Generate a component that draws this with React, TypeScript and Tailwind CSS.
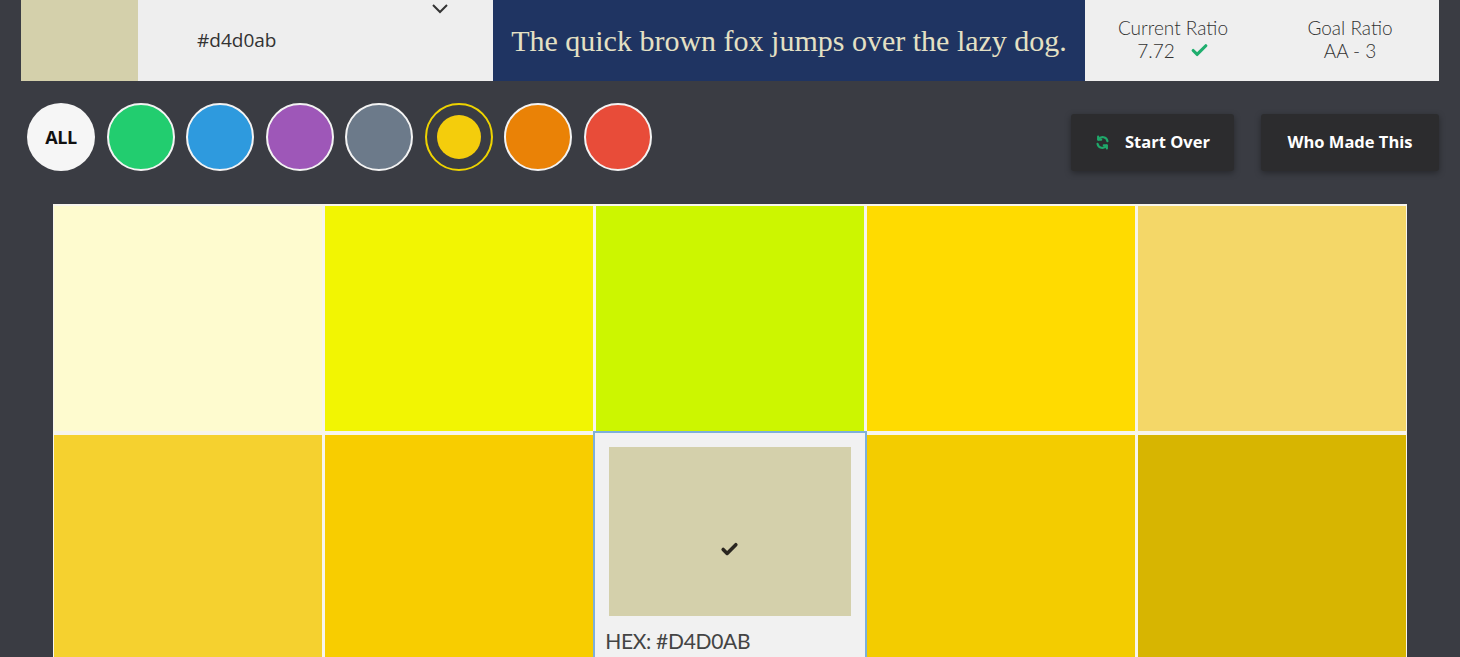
import React from 'react';
import { Check } from 'lucide-react';

const FILTERS = [
  { key: 'green', color: '#22cd6f' },
  { key: 'blue', color: '#2e9ade' },
  { key: 'purple', color: '#9e57b8' },
  { key: 'gray', color: '#6c7a8a' },
  { key: 'yellow', color: '#f4cd0c', active: true },
  { key: 'orange', color: '#ea8206' },
  { key: 'red', color: '#e84c39' },
];

const ROW_ONE = ['#fefbcf', '#f2f502', '#ccf600', '#ffdb00', '#f4d768'];
const ROW_TWO = ['#f5d12f', '#f8cd00', null, '#f3cc00', '#d7b501'];

const RefreshIcon = () => (
  <svg className="w-[15px] h-[15px]" viewBox="0 0 24 24" fill="none" stroke="#1fa86a" strokeWidth={3.4} strokeLinecap="round">
    <path d="M20 10a8 8 0 0 0-14.5-3" />
    <path d="M4 14a8 8 0 0 0 14.5 3" />
    <path d="M5 2.5v5h5" strokeLinejoin="round" />
    <path d="M19 21.5v-5h-5" strokeLinejoin="round" />
  </svg>
);

export default function App() {
  return (
    <div className="w-[1460px] h-[657px] overflow-hidden bg-[#3a3c43]" style={{ fontFamily: '"Open Sans", sans-serif' }}>
      {/* top bar */}
      <div className="mx-[21px] h-[81px] flex">
        <div className="relative w-[117px] bg-[#d4d0ab]">
          <div className="absolute right-[-7px] top-[33px] w-0 h-0 border-y-[7px] border-y-transparent border-l-[7px] border-l-[#d4d0ab]" />
        </div>
        <div className="relative w-[355px] bg-[#eeeeee] flex items-center pl-[59px]">
          <span className="text-[19px] text-[#333] leading-none">#d4d0ab</span>
          <svg className="absolute left-[293px] top-[2px] w-[18px] h-[12px]" viewBox="0 0 18 12" fill="none" stroke="#333" strokeWidth={2}>
            <path d="M2 3l7 7 7-7" />
          </svg>
        </div>
        <div className="w-[592px] bg-[#1f3462] flex items-center justify-center">
          <span className="whitespace-nowrap text-[30px] text-[#e4e0c4] leading-none" style={{ fontFamily: '"Liberation Serif", serif' }}>
            The quick brown fox jumps over the lazy dog.
          </span>
        </div>
        <div className="flex-1 bg-[#efefef] flex text-[#333] text-[19px] leading-[23px] font-light" style={{ fontFamily: 'Lato, sans-serif' }}>
          <div className="w-[176px] flex flex-col items-center justify-center pb-[4px]">
            <span>Current Ratio</span>
            <span className="flex items-center gap-[15px]">
              7.72
              <Check className="w-[19px] h-[19px] text-[#1fae6e]" strokeWidth={4} />
            </span>
          </div>
          <div className="flex-1 flex flex-col items-center justify-center pb-[4px]">
            <span>Goal Ratio</span>
            <span>AA - 3</span>
          </div>
        </div>
      </div>

      {/* filter row */}
      <div className="flex justify-between items-start pl-[27px] pr-[21px]">
        <div className="flex gap-[11.5px] pt-[22px]">
          <div className="w-[68px] h-[68px] rounded-full bg-[#f6f6f6] flex items-center justify-center">
            <span className="text-[18px] font-bold text-[#111] tracking-[-0.5px]">ALL</span>
          </div>
          {FILTERS.map(f =>
            f.active ? (
              <div key={f.key} className="w-[68px] h-[68px] rounded-full border-2 border-[#eed300] flex items-center justify-center">
                <div className="w-[44px] h-[44px] rounded-full" style={{ backgroundColor: f.color }} />
              </div>
            ) : (
              <div key={f.key} className="w-[68px] h-[68px] rounded-full border-2 border-[#f3f3f3]" style={{ backgroundColor: f.color }} />
            )
          )}
        </div>
        <div className="flex gap-[27px] pt-[33px]">
          <button className="w-[163px] h-[57px] bg-[#2c2c2e] rounded-[3px] shadow-[0_2px_6px_rgba(0,0,0,0.35)] flex items-center justify-center gap-[15px] text-white text-[16.5px] font-bold">
            <RefreshIcon />
            Start Over
          </button>
          <button className="w-[178px] h-[57px] bg-[#2c2c2e] rounded-[3px] shadow-[0_2px_6px_rgba(0,0,0,0.35)] flex items-center justify-center text-white text-[16.5px] font-bold">
            Who Made This
          </button>
        </div>
      </div>

      {/* colour grid */}
      <div className="mt-[33px] ml-[53px] w-[1354px] bg-[#f7f5ec] pt-[2px] px-[1px] grid grid-cols-5 gap-[3.5px]">
        {ROW_ONE.map(c => (
          <div key={c} className="h-[225px]" style={{ backgroundColor: c }} />
        ))}
        {ROW_TWO.map((c, i) =>
          c ? (
            <div key={i} className="h-[240px]" style={{ backgroundColor: c }} />
          ) : (
            <div key={i} className="relative z-10 -mx-[3px] -mt-[4px] h-[244px] bg-[#f1f1f1] border-2 border-[#7db0da] p-[14px]">
              <div className="h-[169px] bg-[#d4d0ab] flex items-center justify-center pt-[36px]">
                <Check className="w-[19px] h-[19px] text-[#2a2620]" strokeWidth={4.5} />
              </div>
              <div className="mt-[14px] -ml-[4px] text-[21px] text-[#444] leading-none tracking-[-0.3px]" style={{ fontFamily: 'Lato, sans-serif' }}>
                HEX: #D4D0AB
              </div>
            </div>
          )
        )}
      </div>
    </div>
  );
}
